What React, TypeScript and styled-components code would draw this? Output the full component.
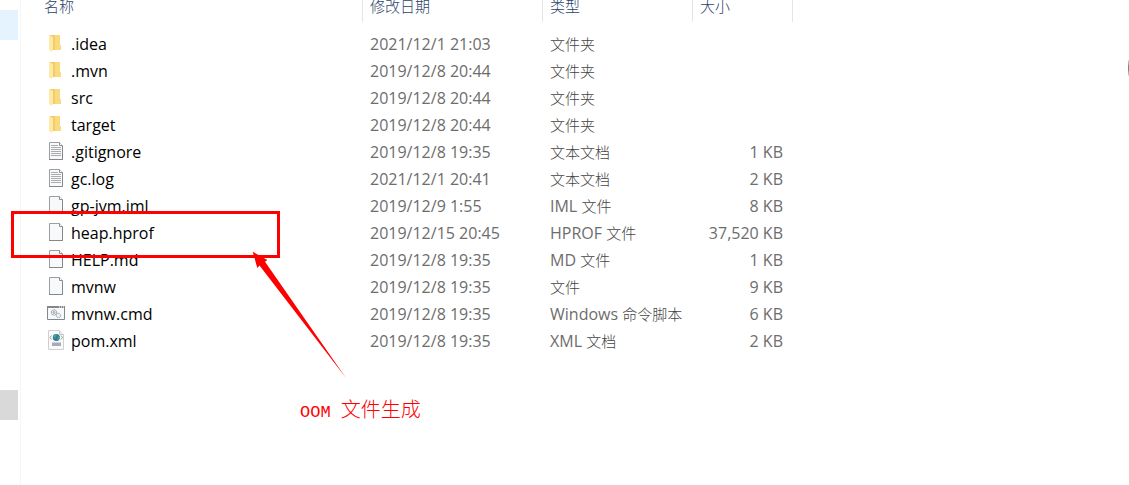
import React from 'react';
import styled, { createGlobalStyle } from 'styled-components';

const GlobalStyle = createGlobalStyle`
  * { box-sizing: border-box; }
  html, body { margin: 0; background: #fff; }
  body { font-family: "Open Sans", "Noto Sans CJK SC", sans-serif; overflow: hidden; }
`;

const Explorer = styled.div`
  position: relative;
  display: flex;
  min-height: 100vh;
`;

const NavPane = styled.nav`
  flex: none;
  width: 21px;
  padding-top: 10px;
  border-right: 1px solid #f5f5f5;
  display: flex;
  flex-direction: column;
  gap: 350px;
`;

const NavItem = styled.div<{ $active?: boolean }>`
  width: 18px;
  height: 30px;
  background: ${p => (p.$active ? '#d9d9d9' : '#e5f3ff')};
`;

const Main = styled.main`
  flex: 1;
  min-width: 0;
`;

const FileTable = styled.table`
  table-layout: fixed;
  width: 772px;
  border-collapse: separate;
  border-spacing: 0;
  font-size: 16px;
`;

const Column = styled.col<{ $width: number }>`
  width: ${p => p.$width}px;
`;

const HeadCell = styled.th<{ $first?: boolean }>`
  height: 22px;
  padding: 0 0 10px ${p => (p.$first ? 23 : 7)}px;
  border-right: 1px solid #e5e5e5;
  color: #2a4268;
  font-size: 15px;
  font-weight: 300;
  line-height: 12px;
  text-align: left;
`;

const Body = styled.tbody`
  &::before { content: ''; display: table-row; height: 9px; }
`;

const Cell = styled.td<{ $right?: boolean }>`
  height: 27px;
  padding: 0 ${p => (p.$right ? 10 : 0)}px 0 7px;
  color: #6d6d6d;
  line-height: 27px;
  text-align: ${p => (p.$right ? 'right' : 'left')};
  white-space: nowrap;
`;

const NameCell = styled(Cell)`
  padding-left: 25px;
  color: #000;
`;

const FileName = styled.div`
  display: flex;
  align-items: center;
  gap: 5px;
  height: 27px;
`;

const Han = styled.span`
  color: #444;
  font-size: 15px;
  font-weight: 300;
`;

const Icon = styled.svg`
  flex: none;
  width: 20px;
  height: 21px;
  overflow: visible;
`;

const Highlight = styled.div`
  position: absolute;
  left: 11px;
  top: 211px;
  width: 269px;
  height: 47px;
  border: 3px solid #f00;
`;

const Arrow = styled.svg`
  position: absolute;
  left: 250px;
  top: 250px;
  width: 100px;
  height: 130px;
`;

const Note = styled.div`
  position: absolute;
  left: 300px;
  top: 400px;
  color: #f00;
  font-family: "Liberation Mono", "Noto Sans CJK SC", monospace;
  font-size: 17px;
  font-weight: 300;
  line-height: 24px;
  white-space: pre;
`;

const NoteHan = styled.span`
  font-size: 20px;
`;

const EdgeMark = styled.div`
  position: absolute;
  right: 0;
  top: 60px;
  width: 1px;
  height: 16px;
  background: linear-gradient(#ddd, #8a7c7c 40%, #8a7c7c 60%, #ddd);
`;

type Kind = 'folder' | 'text' | 'blank' | 'script' | 'xml';

function FileIcon({ kind }: { kind: Kind }) {
  if (kind === 'folder') {
    return (
      <Icon viewBox="0 0 20 21" aria-hidden="true">
        <path d="M4 1h10v10l1 1v4H4z" fill="#f1cc6a" />
        <path d="M9 1h5v10l1 1v4H9z" fill="#f9da7c" />
        <path d="M3 1l4 2v12l-1 3-3-2z" fill="#ffe9a9" />
      </Icon>
    );
  }
  if (kind === 'script') {
    return (
      <Icon viewBox="0 0 20 21" aria-hidden="true">
        <path d="M1.500 2.500h17v13h-17z" fill="#f7f8f9" stroke="#84888c" />
        <path d="M1 2h18v2H1z" fill="#84888c" />
        <path d="M13 3h1m1 0h1m1 0h1" stroke="#fff" />
        <circle cx="8" cy="8.500" r="2.700" fill="#eee" stroke="#888" strokeDasharray="1.200 .6" />
        <circle cx="8" cy="8.500" r="1" fill="none" stroke="#888" strokeWidth=".7" />
        <circle cx="12.500" cy="11.500" r="2.200" fill="#e4f1f8" stroke="#8fa5b3" strokeDasharray="1.200 .5" />
      </Icon>
    );
  }
  if (kind === 'xml') {
    return (
      <Icon viewBox="0 0 20 21" aria-hidden="true">
        <path d="M2.500 -.5h11l4 4v15h-15z" fill="#fafafa" stroke="#d0d0d0" />
        <path d="M13.500 -.5v4h4" fill="#eee" stroke="#c8c8c8" />
        <path d="M5.500 4.500L4 6.500l1.500 2M15 4.500l1.500 2-1.500 2" fill="none" stroke="#9a9a9a" />
        <circle cx="10.300" cy="6.500" r="3.500" fill="#2e75bb" />
        <path d="M7.300 5c1-1.500 2.700-2 3.700-1.500l-1 2.500-1.800 2zM11.500 6l2-1 .2 2.500-2 2z" fill="#3fae5a" />
        <path d="M6 11.500h9v3.500H6z" fill="#a9a9b8" />
      </Icon>
    );
  }
  return (
    <Icon viewBox="0 0 20 21" aria-hidden="true">
      <path d="M3.500 .5h10l3 3v14h-13z" fill="#f8f9fa" stroke="#9b9da0" />
      <path d="M16.500 4v13.500H3" fill="none" stroke="#85888b" />
      <path d="M13.500 .5v3h3" fill="#fff" stroke="#8b8e91" />
      {kind === 'text' && (
        <path d="M5 3.500h7M5 5.500h10M5 7.500h10M5 9.500h10M5 11.500h10M5 13.500h10" stroke="#a9abad" />
      )}
    </Icon>
  );
}

interface FileEntry {
  name: string;
  kind: Kind;
  date: string;
  latin?: string;
  han: string;
  size?: string;
}

const files: FileEntry[] = [
  { name: '.idea', kind: 'folder', date: '2021/12/1 21:03', han: '文件夹' },
  { name: '.mvn', kind: 'folder', date: '2019/12/8 20:44', han: '文件夹' },
  { name: 'src', kind: 'folder', date: '2019/12/8 20:44', han: '文件夹' },
  { name: 'target', kind: 'folder', date: '2019/12/8 20:44', han: '文件夹' },
  { name: '.gitignore', kind: 'text', date: '2019/12/8 19:35', han: '文本文档', size: '1 KB' },
  { name: 'gc.log', kind: 'text', date: '2021/12/1 20:41', han: '文本文档', size: '2 KB' },
  { name: 'gp-jvm.iml', kind: 'blank', date: '2019/12/9 1:55', latin: 'IML', han: '文件', size: '8 KB' },
  { name: 'heap.hprof', kind: 'blank', date: '2019/12/15 20:45', latin: 'HPROF', han: '文件', size: '37,520 KB' },
  { name: 'HELP.md', kind: 'blank', date: '2019/12/8 19:35', latin: 'MD', han: '文件', size: '1 KB' },
  { name: 'mvnw', kind: 'blank', date: '2019/12/8 19:35', han: '文件', size: '9 KB' },
  { name: 'mvnw.cmd', kind: 'script', date: '2019/12/8 19:35', latin: 'Windows', han: '命令脚本', size: '6 KB' },
  { name: 'pom.xml', kind: 'xml', date: '2019/12/8 19:35', latin: 'XML', han: '文档', size: '2 KB' },
];

export default function App() {
  return (
    <>
      <GlobalStyle />
      <Explorer>
        <NavPane>
          <NavItem />
          <NavItem $active />
        </NavPane>
        <Main>
          <FileTable>
            <colgroup>
              <Column $width={342} />
              <Column $width={180} />
              <Column $width={150} />
              <Column $width={100} />
            </colgroup>
            <thead>
              <tr>
                <HeadCell $first>名称</HeadCell>
                <HeadCell>修改日期</HeadCell>
                <HeadCell>类型</HeadCell>
                <HeadCell>大小</HeadCell>
              </tr>
            </thead>
            <Body>
              {files.map(f => (
                <tr key={f.name}>
                  <NameCell>
                    <FileName>
                      <FileIcon kind={f.kind} />
                      {f.name}
                    </FileName>
                  </NameCell>
                  <Cell>{f.date}</Cell>
                  <Cell>
                    {f.latin && `${f.latin} `}
                    <Han>{f.han}</Han>
                  </Cell>
                  <Cell $right>{f.size}</Cell>
                </tr>
              ))}
            </Body>
          </FileTable>
        </Main>
        <Highlight />
        <Arrow viewBox="250 250 100 130" aria-hidden="true">
          <path d="M252.700 251.700L267.300 260l-2.300 1.800L346 378 259.500 265.500l-2.200 2.500z" fill="#f00" />
        </Arrow>
        <Note>
          OOM <NoteHan>文件生成</NoteHan>
        </Note>
        <EdgeMark />
      </Explorer>
    </>
  );
}
